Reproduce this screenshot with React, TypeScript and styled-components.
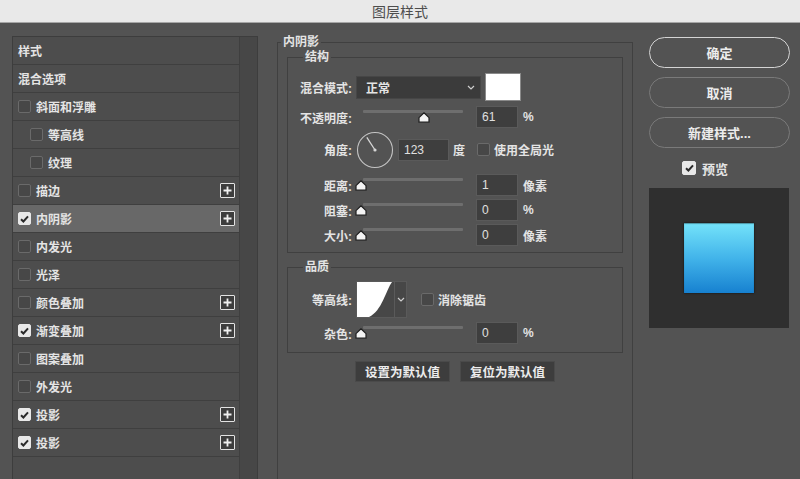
import React from "react";
import styled, { createGlobalStyle } from "styled-components";

const GlobalStyle = createGlobalStyle`
  html, body {
    margin: 0;
    padding: 0;
    background: #535353;
    overflow: hidden;
  }
  body {
    font-family: "Liberation Sans", "Noto Sans CJK SC", sans-serif;
  }
  * {
    box-sizing: border-box;
  }
`;

const Window = styled.div`
  width: 800px;
  height: 479px;
  display: flex;
  flex-direction: column;
  background: #535353;
  color: #e4e4e4;
  font-size: 12px;
  font-weight: 700;
  overflow: hidden;
`;

const TitleBar = styled.div`
  height: 23px;
  flex: none;
  display: flex;
  align-items: center;
  justify-content: center;
  background: #e9e9e9;
  border-bottom: 1px solid #a6a6a6;
  color: #4d4d4d;
  font-size: 14px;
  font-weight: 400;
`;

const Body = styled.div`
  flex: 1;
  min-height: 0;
  display: flex;
  align-items: flex-start;
  padding: 13px 0 0 12px;
`;

/* left: style list */
const StylesPanel = styled.div`
  width: 246px;
  height: 460px;
  flex: none;
  display: flex;
  border: 1px solid #3d3d3d;
  background: #4d4d4d;
`;

const StyleList = styled.div`
  width: 226px;
  flex: none;
`;

const ScrollTrack = styled.div`
  flex: 1;
  background: #474747;
  border-left: 1px solid #3f3f3f;
`;

const StyleRow = styled.div<{ $active?: boolean; $indent?: boolean }>`
  height: 28px;
  display: flex;
  align-items: center;
  gap: 5px;
  padding: 0 4px 0 ${(p) => (p.$indent ? 17 : 5)}px;
  border-bottom: 1px solid #3f3f3f;
  background: ${(p) => (p.$active ? "#686868" : "transparent")};
`;

const RowText = styled.span`
  flex: 1;
`;

const Box = styled.span<{ $checked?: boolean; $size?: number }>`
  width: ${(p) => p.$size ?? 13}px;
  height: ${(p) => p.$size ?? 13}px;
  flex: none;
  display: inline-flex;
  align-items: center;
  justify-content: center;
  border-radius: 2px;
  border: 1px solid ${(p) => (p.$checked ? "#e8e8e8" : "#6a6a6a")};
  background: ${(p) => (p.$checked ? "#e8e8e8" : "#474747")};
`;

const PlusBox = styled.span`
  width: 15px;
  height: 15px;
  flex: none;
  display: inline-flex;
  align-items: center;
  justify-content: center;
  border: 1.5px solid #e2e2e2;
  border-radius: 1px;
  background: #3d3d3d;
`;

/* middle: settings */
const Group = styled.fieldset`
  margin: -1px 0 0 19px;
  width: 356px;
  height: 470px;
  flex: none;
  min-width: 0;
  padding: 0 9px;
  border: 1px solid #404040;
`;

const GroupTitle = styled.legend`
  margin-left: -6px;
  padding: 0 2px;
  line-height: 14px;
`;

const SubGroup = styled.fieldset<{ $mt: number; $pt: number; $pb: number }>`
  margin: ${(p) => p.$mt}px 0 0;
  min-width: 0;
  padding: ${(p) => p.$pt}px 10px ${(p) => p.$pb}px;
  border: 1px solid #404040;
`;

const SubTitle = styled.legend`
  margin-left: 5px;
  padding: 0 2px;
  line-height: 14px;
`;

const Row = styled.div<{ $h: number; $mt?: number }>`
  display: flex;
  align-items: center;
  height: ${(p) => p.$h}px;
  margin-top: ${(p) => p.$mt ?? 0}px;
`;

const Label = styled.span`
  width: 54px;
  flex: none;
  margin-right: 4px;
  text-align: right;
  white-space: nowrap;
`;

const Select = styled.div`
  width: 125px;
  height: 23px;
  display: flex;
  align-items: center;
  justify-content: space-between;
  padding: 0 5px 0 9px;
  background: #3b3b3b;
  border: 1px solid #464646;
`;

const Swatch = styled.div`
  width: 36px;
  height: 28px;
  margin-left: 4px;
  background: #ffffff;
  border: 1px solid #8a8a8a;
`;

const Slider = styled.div`
  position: relative;
  width: 114px;
  height: 100%;
  flex: none;
  padding-top: 4px;
`;

const Track = styled.div`
  height: 3px;
  margin: 0 7px;
  background: #6e6e6e;
  border-radius: 1px;
`;

const Thumb = styled.svg`
  position: absolute;
  top: 6px;
`;

const NumField = styled.div<{ $w?: number }>`
  width: ${(p) => p.$w ?? 42}px;
  height: 22px;
  flex: none;
  display: flex;
  align-items: center;
  padding-left: 5px;
  margin-left: ${(p) => (p.$w ? 4 : 6)}px;
  background: #3e3e3e;
  border: 1px solid #5a5a5a;
  color: #e0e0e0;
  font-weight: 400;
`;

const Unit = styled.span<{ $gap?: number }>`
  margin-left: ${(p) => p.$gap ?? 5}px;
  white-space: nowrap;
`;

const Dial = styled.svg`
  flex: none;
`;

const CheckLabel = styled.span<{ $gap: number }>`
  display: inline-flex;
  align-items: center;
  gap: 4px;
  margin-left: ${(p) => p.$gap}px;
`;

const Contour = styled.div`
  display: flex;
  height: 37px;
  border: 1px solid #5a5a5a;
`;

const ContourArrow = styled.div`
  width: 12px;
  display: flex;
  align-items: center;
  justify-content: center;
  background: #474747;
  border-left: 1px solid #5a5a5a;
`;

const ButtonRow = styled.div`
  display: flex;
  justify-content: center;
  gap: 10px;
  margin-top: 8px;
`;

const FlatButton = styled.div`
  width: 95px;
  height: 21px;
  display: flex;
  align-items: center;
  justify-content: center;
  background: #3d3d3d;
  border: 1px solid #4a4a4a;
  color: #ececec;
  font-size: 12.5px;
`;

/* right column */
const SideColumn = styled.div`
  width: 141px;
  flex: none;
  margin: 1px 0 0 16px;
  display: flex;
  flex-direction: column;
`;

const PillButton = styled.div<{ $primary?: boolean }>`
  height: 31px;
  margin-bottom: 9px;
  display: flex;
  align-items: center;
  justify-content: center;
  border-radius: 16px;
  border: 1.5px solid ${(p) => (p.$primary ? "#d4d4d4" : "#7a7a7a")};
  color: #ececec;
  font-size: 13px;
`;

const PreviewToggle = styled.div`
  height: 14px;
  display: flex;
  align-items: center;
  gap: 6px;
  padding-left: 33px;
  margin-top: 4px;
  font-size: 13px;
`;

const PreviewWell = styled.div`
  width: 140px;
  height: 140px;
  margin-top: 13px;
  display: flex;
  align-items: center;
  justify-content: center;
  background: #2f2f2f;
`;

const PreviewSquare = styled.div`
  width: 70px;
  height: 70px;
  background: linear-gradient(180deg, #74e3fa 0%, #42b4ea 50%, #1781d0 100%);
  box-shadow: inset 0 1px 1px rgba(0, 0, 0, 0.35), 0 0 2px rgba(0, 0, 0, 0.7);
`;

const Check = () => (
  <svg width="9" height="8" viewBox="0 0 9 8">
    <path d="M1 4.2 L3.4 6.5 L8 1.3" fill="none" stroke="#2a2a2a" strokeWidth="2" />
  </svg>
);

const CheckBox = ({ checked, size }: { checked?: boolean; size?: number }) => (
  <Box $checked={checked} $size={size}>
    {checked && <Check />}
  </Box>
);

const Plus = () => (
  <PlusBox>
    <svg width="9" height="9" viewBox="0 0 9 9">
      <path d="M4.5 0.5 V8.5 M0.5 4.5 H8.5" stroke="#f0f0f0" strokeWidth="1.8" />
    </svg>
  </PlusBox>
);

const Chevron = () => (
  <svg width="8" height="5" viewBox="0 0 8 5">
    <path d="M1 1 L4 4 L7 1" fill="none" stroke="#cfcfcf" strokeWidth="1.2" />
  </svg>
);

const SliderControl = ({ value }: { value: number }) => (
  <Slider>
    <Track />
    <Thumb width="12" height="11" viewBox="0 0 12 11" style={{ left: -1 + value * 102 }}>
      <path d="M6 0.8 L11 5.6 V10.2 H1 V5.6 Z" fill="#f4f4f4" stroke="#1f1f1f" strokeWidth="1.2" strokeLinejoin="round" />
    </Thumb>
  </Slider>
);

type StyleItem = { name: string; box?: boolean; checked?: boolean; indent?: boolean; plus?: boolean; active?: boolean };

const styleItems: StyleItem[] = [
  { name: "样式" },
  { name: "混合选项" },
  { name: "斜面和浮雕", box: true },
  { name: "等高线", box: true, indent: true },
  { name: "纹理", box: true, indent: true },
  { name: "描边", box: true, plus: true },
  { name: "内阴影", box: true, checked: true, plus: true, active: true },
  { name: "内发光", box: true },
  { name: "光泽", box: true },
  { name: "颜色叠加", box: true, plus: true },
  { name: "渐变叠加", box: true, checked: true, plus: true },
  { name: "图案叠加", box: true },
  { name: "外发光", box: true },
  { name: "投影", box: true, checked: true, plus: true },
  { name: "投影", box: true, checked: true, plus: true },
];

const sliderRows = [
  { label: "距离:", value: 0, num: "1", unit: "像素", mt: 6 },
  { label: "阻塞:", value: 0, num: "0", unit: "%", mt: 3 },
  { label: "大小:", value: 0, num: "0", unit: "像素", mt: 3 },
];

export default function App() {
  const angle = (123 * Math.PI) / 180;
  return (
    <Window>
      <GlobalStyle />
      <TitleBar>图层样式</TitleBar>
      <Body>
        <StylesPanel>
          <StyleList>
            {styleItems.map((item, i) => (
              <StyleRow key={i} $active={item.active} $indent={item.indent}>
                {item.box && <CheckBox checked={item.checked} />}
                <RowText>{item.name}</RowText>
                {item.plus && <Plus />}
              </StyleRow>
            ))}
          </StyleList>
          <ScrollTrack />
        </StylesPanel>

        <Group>
          <GroupTitle>内阴影</GroupTitle>
          <SubGroup $mt={1} $pt={9} $pb={6}>
            <SubTitle>结构</SubTitle>
            <Row $h={28}>
              <Label>混合模式:</Label>
              <Select>
                <span>正常</span>
                <Chevron />
              </Select>
              <Swatch />
            </Row>
            <Row $h={22} $mt={5}>
              <Label>不透明度:</Label>
              <SliderControl value={0.62} />
              <NumField>61</NumField>
              <Unit>%</Unit>
            </Row>
            <Row $h={37} $mt={3}>
              <Label>角度:</Label>
              <Dial width="38" height="38" viewBox="0 0 38 38">
                <circle cx="19" cy="19" r="17.5" fill="none" stroke="#c4c4c4" strokeWidth="1.1" />
                <line
                  x1="19"
                  y1="19"
                  x2={19 + Math.cos(angle) * 15}
                  y2={19 - Math.sin(angle) * 15}
                  stroke="#d6d6d6"
                  strokeWidth="1.3"
                />
                <circle cx="19" cy="19" r="1.6" fill="#d6d6d6" />
              </Dial>
              <NumField $w={51}>123</NumField>
              <Unit $gap={4}>度</Unit>
              <CheckLabel $gap={12}>
                <CheckBox />
                使用全局光
              </CheckLabel>
            </Row>
            {sliderRows.map((r) => (
              <Row key={r.label} $h={22} $mt={r.mt}>
                <Label>{r.label}</Label>
                <SliderControl value={r.value} />
                <NumField>{r.num}</NumField>
                <Unit>{r.unit}</Unit>
              </Row>
            ))}
          </SubGroup>

          <SubGroup $mt={7} $pt={7} $pb={8}>
            <SubTitle>品质</SubTitle>
            <Row $h={37}>
              <Label>等高线:</Label>
              <Contour>
                <svg width="37" height="35" viewBox="0 0 37 35">
                  <rect width="37" height="35" fill="#474747" />
                  <path d="M0 0 H35 C29 8 25 29 12 35 H0 Z" fill="#ffffff" />
                </svg>
                <ContourArrow>
                  <Chevron />
                </ContourArrow>
              </Contour>
              <CheckLabel $gap={14}>
                <CheckBox />
                消除锯齿
              </CheckLabel>
            </Row>
            <Row $h={22} $mt={4}>
              <Label>杂色:</Label>
              <SliderControl value={0} />
              <NumField>0</NumField>
              <Unit>%</Unit>
            </Row>
          </SubGroup>

          <ButtonRow>
            <FlatButton>设置为默认值</FlatButton>
            <FlatButton>复位为默认值</FlatButton>
          </ButtonRow>
        </Group>

        <SideColumn>
          <PillButton $primary>确定</PillButton>
          <PillButton>取消</PillButton>
          <PillButton>新建样式...</PillButton>
          <PreviewToggle>
            <CheckBox checked size={14} />
            预览
          </PreviewToggle>
          <PreviewWell>
            <PreviewSquare />
          </PreviewWell>
        </SideColumn>
      </Body>
    </Window>
  );
}
